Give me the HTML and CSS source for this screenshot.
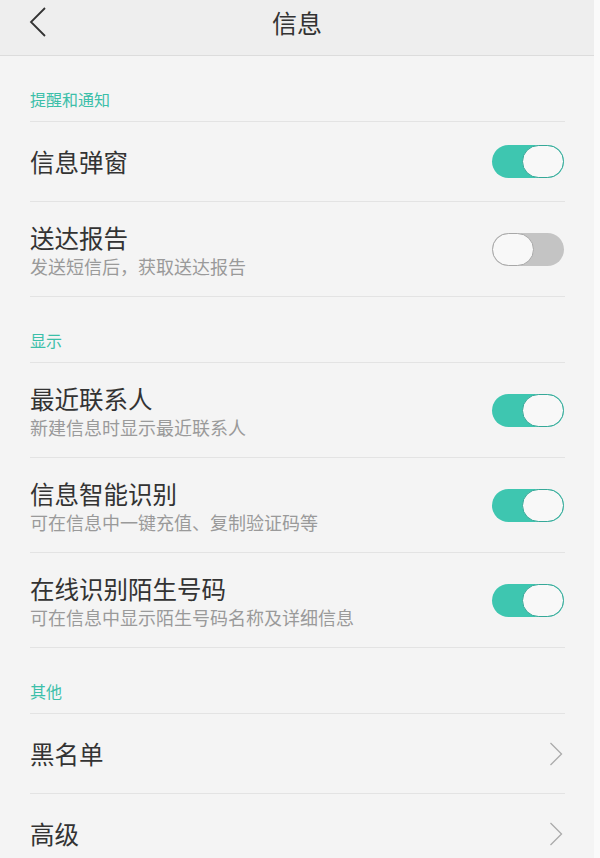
FILE: index.html
```html
<!DOCTYPE html>
<html lang="zh-CN">
<head>
<meta charset="utf-8">
<title>信息</title>
<link rel="stylesheet" href="styles.css">
</head>
<body>
<div class="page">
  <header class="topbar">
    <svg class="back" width="18" height="30" viewBox="0 0 18 30"><path d="M16 1 L2 15 L16 29" fill="none" stroke="#333" stroke-width="1.8"/></svg>
    <h1 class="title">信息</h1>
  </header>
  <main class="content">
    <div class="section">提醒和通知</div>
    <div class="row">
      <div class="text"><div class="name">信息弹窗</div></div>
      <span class="switch on"><span class="knob"></span></span>
    </div>
    <div class="row two">
      <div class="text"><div class="name">送达报告</div><div class="desc">发送短信后，获取送达报告</div></div>
      <span class="switch off"><span class="knob"></span></span>
    </div>

    <div class="section">显示</div>
    <div class="row two">
      <div class="text"><div class="name">最近联系人</div><div class="desc">新建信息时显示最近联系人</div></div>
      <span class="switch on"><span class="knob"></span></span>
    </div>
    <div class="row two">
      <div class="text"><div class="name">信息智能识别</div><div class="desc">可在信息中一键充值、复制验证码等</div></div>
      <span class="switch on"><span class="knob"></span></span>
    </div>
    <div class="row two">
      <div class="text"><div class="name">在线识别陌生号码</div><div class="desc">可在信息中显示陌生号码名称及详细信息</div></div>
      <span class="switch on"><span class="knob"></span></span>
    </div>

    <div class="section">其他</div>
    <div class="row">
      <div class="text"><div class="name">黑名单</div></div>
      <svg class="chev" width="14" height="24" viewBox="0 0 14 24"><path d="M1.5 1 L12.5 12 L1.5 23" fill="none" stroke="#aaa" stroke-width="1.3"/></svg>
    </div>
    <div class="row">
      <div class="text"><div class="name">高级</div></div>
      <svg class="chev" width="14" height="24" viewBox="0 0 14 24"><path d="M1.5 1 L12.5 12 L1.5 23" fill="none" stroke="#aaa" stroke-width="1.3"/></svg>
    </div>
  </main>
</div>
</body>
</html>
```

FILE: styles.css
```css
* { box-sizing: border-box; margin: 0; padding: 0; }
html, body { height: 100%; }
body {
  background: #fafafa;
  font-family: "Noto Sans CJK SC", "Noto Sans", sans-serif;
  overflow: hidden;
}
.page {
  width: 594px;
  min-height: 858px;
  background: #f4f4f4;
}
.topbar {
  height: 56px;
  background: #eeeeee;
  border-bottom: 1px solid #dcdcdc;
  display: flex;
  align-items: center;
  justify-content: center;
  position: relative;
}
.back {
  position: absolute;
  left: 29px;
  top: 7px;
}
.title {
  font-size: 25px;
  font-weight: 400;
  color: #333;
  line-height: 30px;
  margin-top: -12px;
}
.content {
  padding: 0 29px 0 30px;
}
.section {
  height: 66px;
  padding-top: 32px;
  font-size: 16px;
  line-height: 22px;
  color: #3cbfa9;
  border-bottom: 1px solid #e3e3e3;
}
.row {
  height: 80px;
  display: flex;
  align-items: center;
  justify-content: space-between;
  border-bottom: 1px solid #e3e3e3;
}
.row.two { height: 95px; }
.text { display: flex; flex-direction: column; }
.row.two .text { padding-top: 4px; }
.name {
  font-size: 24.5px;
  line-height: 30px;
  color: #333;
}
.desc {
  font-size: 18px;
  line-height: 26px;
  color: #9a9a9a;
}
.switch {
  width: 72px;
  height: 33px;
  border-radius: 17px;
  display: flex;
  align-items: center;
  margin-right: 1px;
}
.switch.on { background: #3ec6b0; justify-content: flex-end; }
.switch.off { background: #c4c4c4; justify-content: flex-start; }
.knob {
  width: 42px;
  height: 33px;
  border-radius: 17px;
  background: #f8f8f8;
}
.switch.on .knob { border: 1.5px solid #36a898; }
.switch.off .knob { border: 1.5px solid #a8a8a8; }
.chev { margin-right: 2px; }
```
